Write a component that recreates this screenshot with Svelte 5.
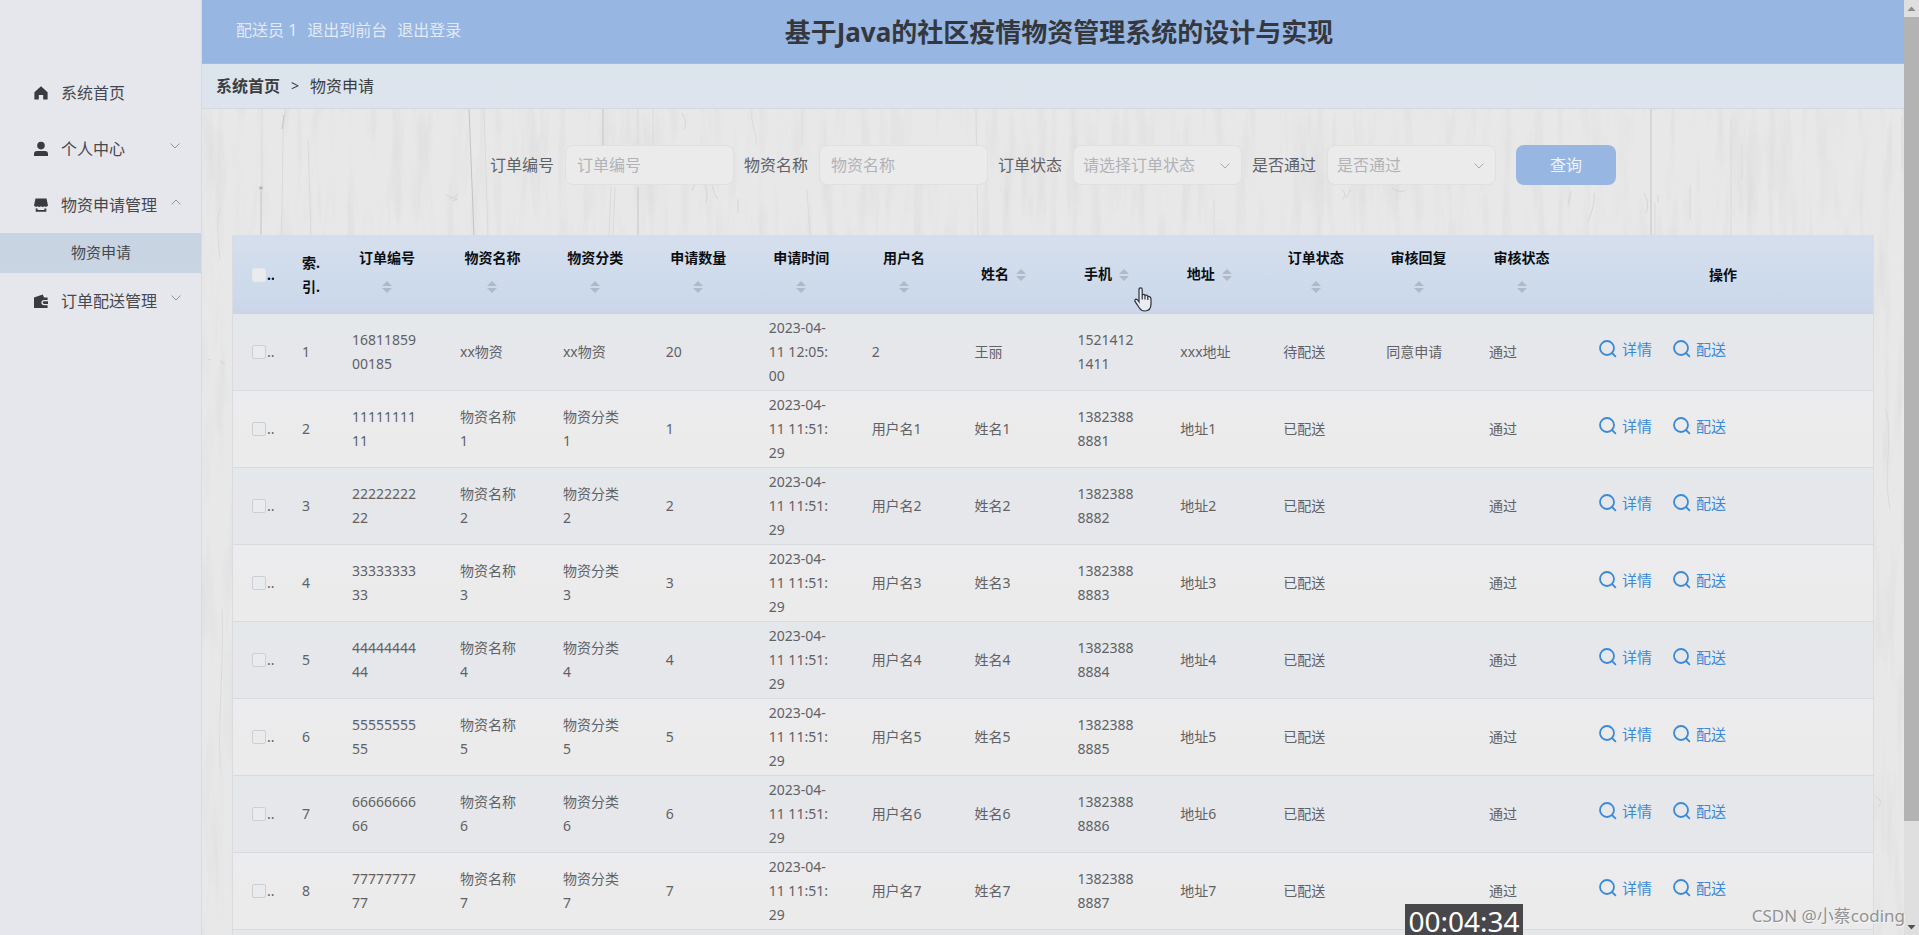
<script>
  const sortable = ['订单编号', '物资名称', '物资分类', '申请数量', '申请时间', '用户名', '姓名', '手机', '地址', '订单状态', '审核回复', '审核状态'];

  const rows = [
    ['1681185900185', 'xx物资', 'xx物资', '20', '2023-04-11 12:05:00', '2', '王丽', '15214121411', 'xxx地址', '待配送', '同意申请', '通过'],
    ...[1, 2, 3, 4, 5, 6, 7].map((n) => [
      String(n).repeat(10), `物资名称${n}`, `物资分类${n}`, `${n}`, '2023-04-11 11:51:29',
      `用户名${n}`, `姓名${n}`, `1382388888${n}`, `地址${n}`, '已配送', '', '通过'
    ])
  ];

  const faintStreaks = [
    'M60 0 V78', 'M84 0 C79 20 82 60 79 128', 'M106 30 L109 128', 'M282 0 L286 128', 'M451 0 V36', 'M436 0 V36',
    'M409 78 L407 128', 'M413 78 L411 128', 'M550 0 C548 16 556 24 554 36', 'M600 0 V36', 'M605 80 L608 128',
    'M774 0 L776 128', 'M1012 90 V128', 'M1453 94 V128', 'M1529 10 V128', 'M1540 36 V70', 'M1488 76 V110',
    'M1700 8 V60', 'M18 100 C14 110 16 130 18 150', 'M20 500 C22 560 16 600 18 660', 'M1684 300 C1692 330 1680 360 1688 400'
  ];
  const darkStreaks = ['M59 82 V128', 'M82 6 L80 20', 'M267 0 L269 50 L272 128', 'M401 0 V36', 'M436 78 V128', 'M1449 0 V128'];
</script>

{#snippet chevron(up)}
  <svg class="chevron" viewBox="0 0 12 8" aria-hidden="true">
    <path d={up ? 'M1.5 6.5 L6 2 L10.5 6.5' : 'M1.5 1.5 L6 6 L10.5 1.5'} />
  </svg>
{/snippet}

{#snippet magnifier()}
  <svg class="magnifier" viewBox="0 0 18 18" aria-hidden="true">
    <circle cx="8" cy="8" r="7" />
    <path d="M13 13 L16.4 16.4" />
  </svg>
{/snippet}

<div class="shell">
  <nav class="sidebar">
    <a class="item" href="#home">
      <svg class="icon" viewBox="0 0 14 14" aria-hidden="true"><path d="M7 .3 L13.6 6.2 V13.4 H9.2 V9 H4.8 V13.4 H.4 V6.2 Z" /></svg>
      <span>系统首页</span>
    </a>
    <button class="item">
      <svg class="icon" viewBox="0 0 14 14" aria-hidden="true"><circle cx="7" cy="3.6" r="3.8" /><path d="M0 14 V12 Q0 9 3 9 H11 Q14 9 14 12 V14 Z" /></svg>
      <span>个人中心</span>
      {@render chevron(false)}
    </button>
    <button class="item" aria-expanded="true">
      <svg class="icon" viewBox="0 0 14 14" aria-hidden="true"><path d="M1.5 .4 H12.5 L14 7.5 Q12.3 9.8 10.5 8.2 Q8.8 9.8 7 8.2 Q5.2 9.8 3.5 8.2 Q1.7 9.8 0 7.5 Z" /><path d="M1.7 10.4 H3.6 V12 H10.4 V10.4 H12.3 V13.8 H1.7 Z" /></svg>
      <span>物资申请管理</span>
      {@render chevron(true)}
    </button>
    <a class="subitem" href="#requests">物资申请</a>
    <button class="item">
      <svg class="icon" viewBox="0 0 14 14" aria-hidden="true"><path d="M0 3.6 L8.8 .4 L10 3.6 H13.6 V6 H10 A2.6 2.6 0 0 0 10 11.2 H13.6 V14 H0 Z" /><path d="M10.2 7.2 H14 V10 H10.2 A1.4 1.4 0 0 1 10.2 7.2 Z" /></svg>
      <span>订单配送管理</span>
      {@render chevron(false)}
    </button>
  </nav>

  <div class="page">
    <header>
      <div class="account">
        <span>配送员 1</span>
        <a href="#front">退出到前台</a>
        <a href="#logout">退出登录</a>
      </div>
      <h1>基于Java的社区疫情物资管理系统的设计与实现</h1>
    </header>

    <div class="crumbs">
      <a href="#home">系统首页</a>
      <span class="sep">&gt;</span>
      <span>物资申请</span>
    </div>

    <main>
      <svg class="wood" viewBox="0 0 1702 826" preserveAspectRatio="none" aria-hidden="true">
        <filter id="grain" x="0" y="0" width="100%" height="100%" color-interpolation-filters="sRGB">
          <feTurbulence type="fractalNoise" baseFrequency="0.09 0.009" numOctaves="4" seed="8" />
          <feColorMatrix values="0 0 0 0 .6  0 0 0 0 .6  0 0 0 0 .6  1.6 0 0 0 -.75" />
        </filter>
        <rect width="1702" height="826" filter="url(#grain)" opacity=".16" />
        {#each faintStreaks as d}
          <path {d} />
        {/each}
        {#each darkStreaks as d}
          <path class="dark" {d} />
        {/each}
        <circle class="knot" cx="59" cy="79" r="2" />
        <g class="marks">
          <path d="M244 86 l9 4 l3 -6 M247 90 l6 -3 M250 92 l6 -2" />
          <path d="M480 4 q6 10 2 16 M484 40 q-2 14 4 22 q8 10 2 20 M498 70 q10 8 6 24 M512 64 q-4 18 4 26 M536 90 v14" />
          <path d="M1140 80 q6 8 0 10 M1149 80 l-5 9 M1190 79 q8 6 13 2 M1369 82 l-3 14 M1392 84 q2 10 -6 28 M1442 84 q6 10 2 20 M1456 86 v8" />
          <path d="M6 250 l3 1 M18 252 l5 4 M1674 688 q8 4 2 10" />
        </g>
      </svg>

      <form class="search" onsubmit={(e) => e.preventDefault()}>
        <div class="field">
          <label for="order">订单编号</label>
          <input id="order" type="text" placeholder="订单编号" />
        </div>
        <div class="field">
          <label for="goods">物资名称</label>
          <input id="goods" type="text" placeholder="物资名称" />
        </div>
        <div class="field">
          <label for="state">订单状态</label>
          <div class="select">
            <select id="state"><option>请选择订单状态</option></select>
            {@render chevron(false)}
          </div>
        </div>
        <div class="field">
          <label for="passed">是否通过</label>
          <div class="select">
            <select id="passed"><option>是否通过</option></select>
            {@render chevron(false)}
          </div>
        </div>
        <button class="query">查询</button>
      </form>

      <div class="panel">
        <table>
          <colgroup>
            <col class="narrow" /><col class="narrow" /><col class="number" />
            {#each sortable.slice(1) as name}<col />{/each}
            <col class="wide" />
          </colgroup>
          <thead>
            <tr>
              <th><div class="tick"><input type="checkbox" aria-label="全选" /><span>..</span></div></th>
              <th class="index">索.<br />引.</th>
              {#each sortable as name}
                <th>
                  {name}<button class="sort" aria-label="排序"><i class="up"></i><i class="down"></i></button>
                </th>
              {/each}
              <th>操作</th>
            </tr>
          </thead>
          <tbody>
            {#each rows as row, i}
              <tr>
                <td><div class="tick"><input type="checkbox" aria-label="选择" /><span>..</span></div></td>
                <td>{i + 1}</td>
                {#each row as value}<td>{value}</td>{/each}
                <td class="operations">
                  <div class="actions">
                    <button>{@render magnifier()}<span>详情</span></button>
                    <button>{@render magnifier()}<span>配送</span></button>
                  </div>
                </td>
              </tr>
            {/each}
          </tbody>
        </table>
      </div>
    </main>
  </div>

  <div class="scrollbar" aria-hidden="true">
    <svg viewBox="0 0 15 17"><path d="M3.5 11 L7.5 6.5 L11.5 11 Z" fill="#8c8c8c" /></svg>
    <div class="thumb"></div>
    <svg viewBox="0 0 15 17"><path d="M3.5 7 L7.5 11.5 L11.5 7 Z" fill="#505050" /></svg>
  </div>

  <svg class="pointer" viewBox="0 0 18 25" aria-hidden="true">
    <path d="M5 14.8 V2.6 Q5 .8 6.6 .8 Q8.2 .8 8.2 2.6 V8 Q9.8 6.8 11 8.4 Q12.8 7.4 13.8 9.4 Q16.4 8.8 17 11.4 V17 Q17 24 10.6 24 Q7.4 24 5.4 21 L1 14.4 Q.4 12.6 2 12.2 Q3.4 12.2 5 14.8 Z M8.2 8 V12.4 M11 8.4 V12.6 M13.8 9.4 V13" />
  </svg>
  <div class="timer">00:04:34</div>
  <div class="watermark">CSDN @小蔡coding</div>
</div>

<style>
  :global(body) {
    margin: 0;
    overflow: hidden;
  }

  .shell {
    position: relative;
    display: flex;
    height: 100vh;
    overflow: hidden;
    background: #e8e8e8;
    color: #606266;
    font: 16px/24px "Noto Sans", "Noto Sans CJK SC", sans-serif;
  }

  .shell *, .shell {
    box-sizing: border-box;
  }

  button, input, select {
    font: inherit;
    color: inherit;
  }

  button {
    padding: 0;
    border: 0;
    background: none;
    cursor: pointer;
  }

  a {
    color: inherit;
    text-decoration: none;
  }

  .sidebar {
    flex: none;
    width: 202px;
    padding-top: 65px;
    background: #e5e7ec;
    border-right: 1px solid #d6dbe3;
    color: #46484d;
    white-space: nowrap;
  }

  .item {
    display: flex;
    align-items: center;
    gap: 13px;
    width: 100%;
    height: 56px;
    padding: 0 20px 0 34px;
    text-align: left;
  }

  .icon {
    flex: none;
    width: 14px;
    height: 14px;
    fill: #393b40;
    overflow: visible;
  }

  .chevron {
    flex: none;
    width: 12px;
    height: 8px;
    fill: none;
    stroke: #909399;
    stroke-width: 1;
  }

  .item .chevron {
    margin: 0 0 6px auto;
  }

  .subitem {
    display: block;
    height: 40px;
    padding: 0 71px;
    background: linear-gradient(#c8d4e1, #c8d5e2);
    font-size: 15px;
    line-height: 38px;
  }

  .page {
    display: flex;
    flex: 1;
    flex-direction: column;
    min-width: 0;
  }

  header {
    display: grid;
    grid-template-columns: 1fr auto 1fr;
    align-items: center;
    height: 64px;
    padding: 0 22px 0 34px;
    background: #97b6e1;
    border-bottom: 1px solid #a4bcdd;
  }

  .account {
    display: flex;
    gap: 10px;
    padding-bottom: 3px;
    color: #e2eaf7;
  }

  h1 {
    margin: 0;
    color: #34383e;
    font-size: 26px;
    line-height: 40px;
  }

  .crumbs {
    display: flex;
    gap: 11px;
    align-items: center;
    height: 45px;
    padding: 0 14px;
    background: linear-gradient(#dce5ec, #dde4ec 40%, #dee3ec);
    border-bottom: 1px solid #d3d8de;
    color: #3a3d42;
  }

  .crumbs a {
    font-weight: 700;
  }

  .sep {
    font-size: 14px;
  }

  main {
    position: relative;
    display: flex;
    flex: 1;
    flex-direction: column;
    min-height: 0;
    padding: 36px 30px 0;
  }

  .wood {
    position: absolute;
    inset: 0;
    width: 100%;
    height: 100%;
    fill: none;
    stroke: #dadada;
    stroke-width: 1;
  }

  .dark {
    stroke: #c3c3c3;
  }

  .knot {
    fill: #b0b0b0;
  }

  .marks {
    stroke: #d6d6d6;
  }

  .search {
    position: relative;
    display: flex;
    justify-content: center;
    margin-bottom: 50px;
  }

  .field {
    display: flex;
    gap: 11px;
    align-items: center;
    margin-right: 10px;
  }

  .search input, .search select {
    display: block;
    width: 169px;
    height: 40px;
    padding: 0 11px;
    background: #ebebeb;
    border: 1px solid #dfe0e2;
    border-radius: 8px;
    outline: 0;
  }

  .search select {
    padding: 0 9px;
    appearance: none;
    color: #b1b3b8;
  }

  .search input::placeholder {
    color: #b1b3b8;
    opacity: 1;
  }

  .select {
    position: relative;
  }

  .select .chevron {
    position: absolute;
    top: 17px;
    right: 11px;
    stroke: #a9abb0;
  }

  .query {
    width: 100px;
    height: 40px;
    margin-left: 10px;
    background: #97b6e1;
    border-radius: 8px;
    color: #eef3fa;
  }

  .panel {
    position: relative;
    flex: 1;
    min-height: 0;
    overflow: hidden;
    background: #e6e7e8;
    border-left: 1px solid #d9dbde;
    border-right: 1px solid #d9dbde;
  }

  table {
    width: 100%;
    table-layout: fixed;
    border-collapse: separate;
    border-spacing: 0;
    font-size: 14px;
    word-break: break-all;
  }

  .narrow {
    width: 50px;
  }

  .number {
    width: 108px;
  }

  .wide {
    width: 300px;
  }

  thead tr {
    height: 79px;
    background: linear-gradient(#d6deec, #d1ddec 35%, #ccd9ea 80%, #ccd5e8);
  }

  th {
    padding: 0 19px;
    color: #0c0e12;
    font-weight: 700;
  }

  th.index {
    text-align: left;
    white-space: nowrap;
  }

  .sort {
    display: inline-flex;
    flex-direction: column;
    gap: 2px;
    align-items: center;
    justify-content: center;
    width: 24px;
    height: 34px;
    vertical-align: middle;
  }

  .sort i {
    border: 5px solid transparent;
  }

  .sort .up {
    border-top: 0;
    border-bottom-color: #afbac9;
  }

  .sort .down {
    border-bottom: 0;
    border-top-color: #afbac9;
  }

  tbody tr {
    height: 77px;
    background: linear-gradient(#ebecef, #ebebeb 60%);
  }

  tbody tr:nth-child(odd) {
    background: linear-gradient(#e4e8ea, #e7e7eb 50%, #e5e7eb);
  }

  td {
    padding: 0 21px 0 19px;
    border-bottom: 1px solid #d8dadd;
  }

  td:first-child, td:nth-child(2) {
    padding-right: 9px;
  }

  .tick {
    display: flex;
    gap: 1px;
    align-items: center;
    width: 22px;
    overflow: hidden;
  }

  .tick input {
    flex: none;
    width: 14px;
    height: 14px;
    margin: 0;
    appearance: none;
    background: #eaebec;
    border: 1px solid #cccfd4;
    border-radius: 2px;
  }

  th .tick input {
    border-color: #e3e7ee;
  }

  .operations {
    padding: 0 26px;
  }

  .actions {
    display: flex;
    gap: 21px;
    padding-bottom: 6px;
    color: #3b8ad8;
    font-size: 15px;
  }

  .actions button {
    display: flex;
    gap: 5px;
    align-items: center;
  }

  .magnifier {
    width: 18px;
    height: 18px;
    fill: none;
    stroke: #3b8ad8;
    stroke-width: 1.8;
    stroke-linecap: round;
  }

  .scrollbar {
    display: flex;
    flex: none;
    flex-direction: column;
    width: 15px;
    background: #dfdfdf;
  }

  .scrollbar svg {
    width: 15px;
    height: 17px;
  }

  .scrollbar svg:last-child {
    margin-top: auto;
  }

  .thumb {
    height: 86%;
    background: #b3b3b3;
  }

  .pointer {
    position: absolute;
    top: 287px;
    left: 1134px;
    width: 18px;
    height: 25px;
    fill: #e9edf3;
    stroke: #2c3038;
    stroke-width: 1.2;
  }

  .timer {
    position: absolute;
    bottom: 0;
    left: 1405px;
    width: 118px;
    height: 31px;
    padding-top: 3px;
    background: #48474b;
    color: #fff;
    font-size: 28px;
    line-height: 28px;
    text-align: center;
  }

  .watermark {
    position: absolute;
    right: 14px;
    bottom: 7px;
    color: #929396;
    font-size: 17px;
    text-shadow: 1px 1px 0 #f6f6f6;
  }
</style>
